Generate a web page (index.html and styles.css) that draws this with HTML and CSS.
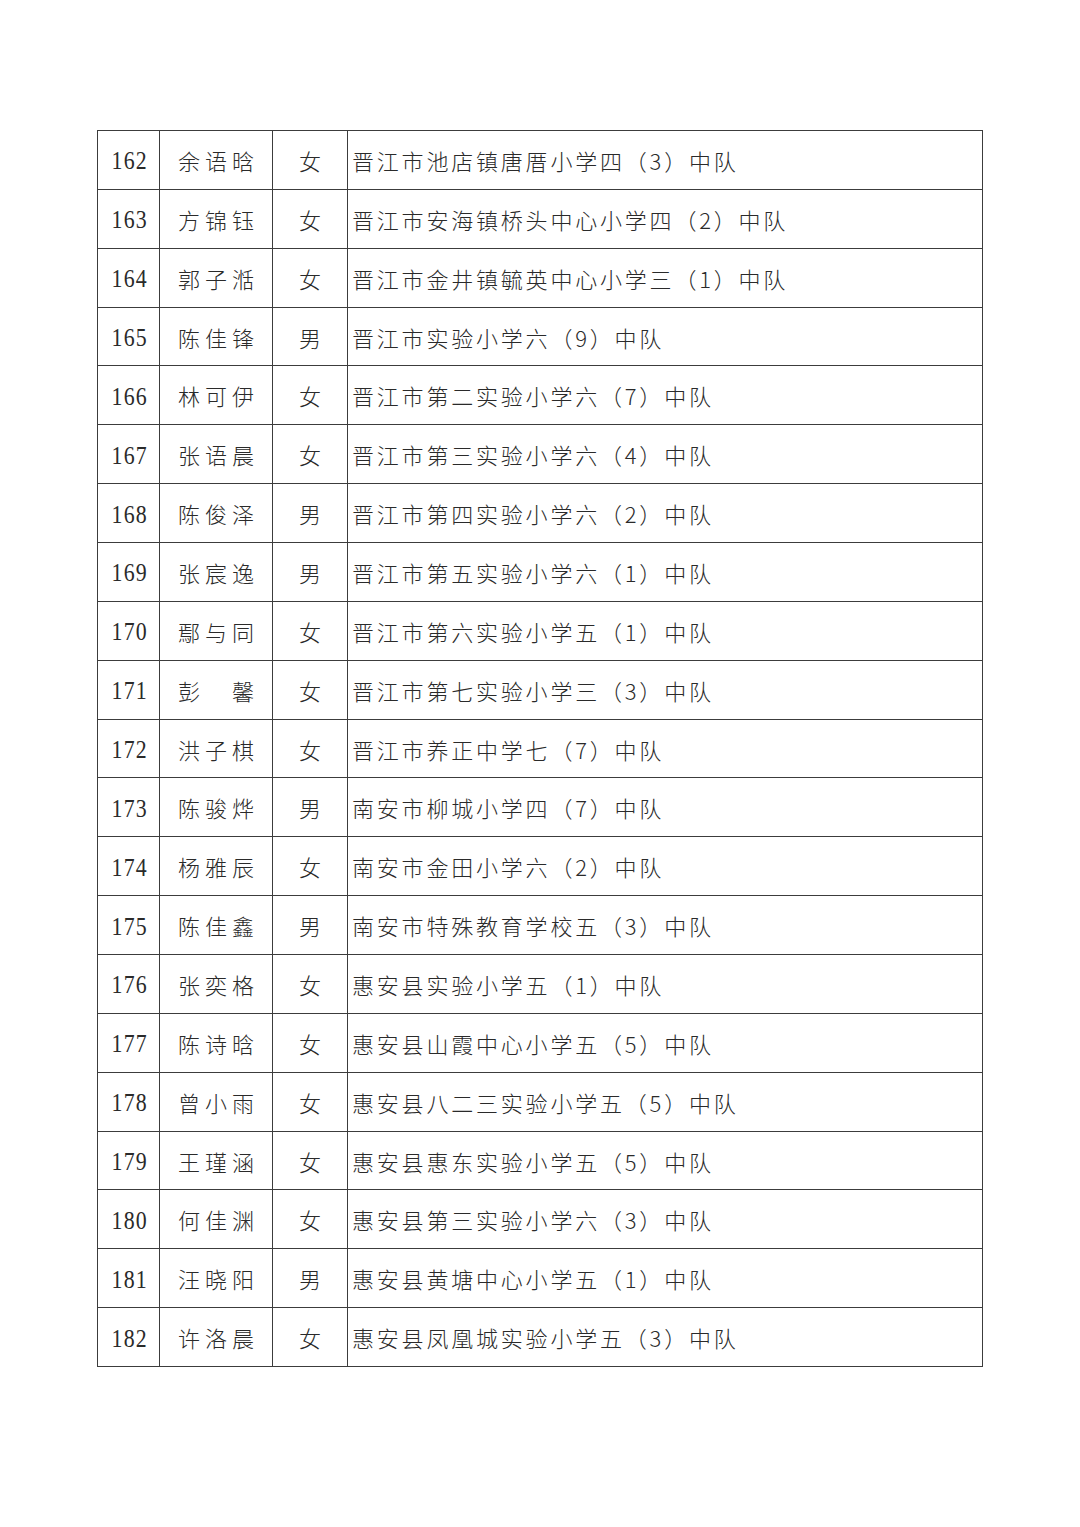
FILE: index.html
```html
<!DOCTYPE html>
<html lang="zh-CN">
<head>
<meta charset="utf-8">
<title>名单</title>
<link rel="stylesheet" href="styles.css">
</head>
<body>
<div class="page">
<table class="list">
<colgroup><col class="c-no"><col class="c-name"><col class="c-sex"><col class="c-school"></colgroup>
<tbody>
<tr><td class="no"><span>162</span></td><td class="name"><span>余语晗</span></td><td class="sex">女</td><td class="school">晋江市池店镇唐厝小学四（3）中队</td></tr>
<tr><td class="no"><span>163</span></td><td class="name"><span>方锦钰</span></td><td class="sex">女</td><td class="school">晋江市安海镇桥头中心小学四（2）中队</td></tr>
<tr><td class="no"><span>164</span></td><td class="name"><span>郭子湉</span></td><td class="sex">女</td><td class="school">晋江市金井镇毓英中心小学三（1）中队</td></tr>
<tr><td class="no"><span>165</span></td><td class="name"><span>陈佳锋</span></td><td class="sex">男</td><td class="school">晋江市实验小学六（9）中队</td></tr>
<tr><td class="no"><span>166</span></td><td class="name"><span>林可伊</span></td><td class="sex">女</td><td class="school">晋江市第二实验小学六（7）中队</td></tr>
<tr><td class="no"><span>167</span></td><td class="name"><span>张语晨</span></td><td class="sex">女</td><td class="school">晋江市第三实验小学六（4）中队</td></tr>
<tr><td class="no"><span>168</span></td><td class="name"><span>陈俊泽</span></td><td class="sex">男</td><td class="school">晋江市第四实验小学六（2）中队</td></tr>
<tr><td class="no"><span>169</span></td><td class="name"><span>张宸逸</span></td><td class="sex">男</td><td class="school">晋江市第五实验小学六（1）中队</td></tr>
<tr><td class="no"><span>170</span></td><td class="name"><span>鄢与同</span></td><td class="sex">女</td><td class="school">晋江市第六实验小学五（1）中队</td></tr>
<tr><td class="no"><span>171</span></td><td class="name"><span>彭　馨</span></td><td class="sex">女</td><td class="school">晋江市第七实验小学三（3）中队</td></tr>
<tr><td class="no"><span>172</span></td><td class="name"><span>洪子棋</span></td><td class="sex">女</td><td class="school">晋江市养正中学七（7）中队</td></tr>
<tr><td class="no"><span>173</span></td><td class="name"><span>陈骏烨</span></td><td class="sex">男</td><td class="school">南安市柳城小学四（7）中队</td></tr>
<tr><td class="no"><span>174</span></td><td class="name"><span>杨雅辰</span></td><td class="sex">女</td><td class="school">南安市金田小学六（2）中队</td></tr>
<tr><td class="no"><span>175</span></td><td class="name"><span>陈佳鑫</span></td><td class="sex">男</td><td class="school">南安市特殊教育学校五（3）中队</td></tr>
<tr><td class="no"><span>176</span></td><td class="name"><span>张奕格</span></td><td class="sex">女</td><td class="school">惠安县实验小学五（1）中队</td></tr>
<tr><td class="no"><span>177</span></td><td class="name"><span>陈诗晗</span></td><td class="sex">女</td><td class="school">惠安县山霞中心小学五（5）中队</td></tr>
<tr><td class="no"><span>178</span></td><td class="name"><span>曾小雨</span></td><td class="sex">女</td><td class="school">惠安县八二三实验小学五（5）中队</td></tr>
<tr><td class="no"><span>179</span></td><td class="name"><span>王瑾涵</span></td><td class="sex">女</td><td class="school">惠安县惠东实验小学五（5）中队</td></tr>
<tr><td class="no"><span>180</span></td><td class="name"><span>何佳渊</span></td><td class="sex">女</td><td class="school">惠安县第三实验小学六（3）中队</td></tr>
<tr><td class="no"><span>181</span></td><td class="name"><span>汪晓阳</span></td><td class="sex">男</td><td class="school">惠安县黄塘中心小学五（1）中队</td></tr>
<tr><td class="no"><span>182</span></td><td class="name"><span>许洛晨</span></td><td class="sex">女</td><td class="school">惠安县凤凰城实验小学五（3）中队</td></tr>
</tbody>
</table>
</div>
</body>
</html>
```

FILE: styles.css
```css
html, body {
  margin: 0;
  padding: 0;
  background: #ffffff;
}

.page {
  width: 1080px;
  height: 1527px;
  padding: 130px 0 0 97px;
  box-sizing: border-box;
}

.list {
  border-collapse: collapse;
  table-layout: fixed;
  width: 885px;
  color: #2a2a2a;
  font-family: "Noto Sans CJK SC", "Noto Sans CJK JP", sans-serif;
  font-weight: 300;
  font-size: 22px;
}

.c-no { width: 62px; }
.c-name { width: 113px; }
.c-sex { width: 75px; }
.c-school { width: 635px; }

.list tr {
  height: 58.86px;
}

.list td {
  border: 1px solid #3c3c3c;
  padding: 0;
  vertical-align: middle;
  white-space: nowrap;
  line-height: 1;
}

.list td.no {
  text-align: center;
  font-family: "Liberation Serif", serif;
  font-weight: 400;
  font-size: 26px;
  padding-top: 3px;
}

.no span {
  display: inline-block;
  transform: scaleX(0.84);
  letter-spacing: 1.5px;
  margin-right: -1.5px;
}

.name {
  text-align: center;
}

.name span {
  letter-spacing: 5px;
  margin-right: -5px;
}

.sex {
  text-align: center;
}

.list td.school {
  padding-left: 4px;
  letter-spacing: 2.8px;
}
```
